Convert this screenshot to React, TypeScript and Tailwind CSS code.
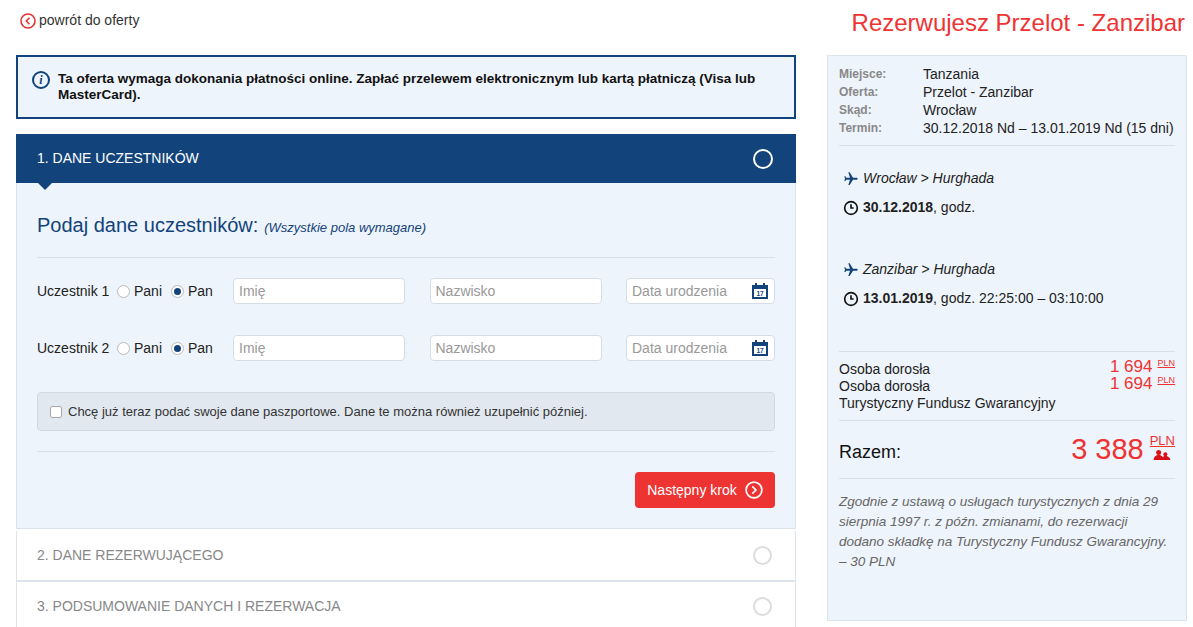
import React from "react";

const blue = "#12437a";

function Plane() {
  return (
    <svg viewBox="0 0 24 24" className="h-4 w-4" fill={blue}>
      <path d="M21 16v-2l-8-5V3.5a1.5 1.5 0 0 0-3 0V9l-8 5v2l8-2.5V19l-2 1.5V22l3.5-1 3.5 1v-1.5L13 19v-5.5z" transform="rotate(90 12 12)" />
    </svg>
  );
}

function Clock() {
  return (
    <svg viewBox="0 0 24 24" className="h-4 w-4" fill="none" stroke="#111" strokeWidth="2.5">
      <circle cx="12" cy="12" r="9.5" />
      <path d="M12 6.5V12h4" />
    </svg>
  );
}

function Cal() {
  return (
    <svg viewBox="0 0 18 18" className="h-[18px] w-[18px]">
      <rect x="1" y="3" width="16" height="14" fill={blue} />
      <rect x="3" y="7" width="12" height="8" fill="#fff" />
      <rect x="4" y="1" width="2" height="4" fill={blue} />
      <rect x="12" y="1" width="2" height="4" fill={blue} />
      <text x="9" y="14" fontSize="6.5" textAnchor="middle" fill={blue} fontFamily="Liberation Sans" fontWeight="bold">17</text>
    </svg>
  );
}

function Row({ n }: { n: number }) {
  return (
    <div className="flex items-center h-[26px] text-[14px] text-[#222]">
      <span className="w-[80px]">Uczestnik {n}</span>
      <span className="flex items-center gap-1 w-[54px]">
        <span className="h-[13px] w-[13px] rounded-full border border-[#bbb] bg-white" />
        Pani
      </span>
      <span className="flex items-center gap-1 w-[62px]">
        <span className="h-[13px] w-[13px] rounded-full border border-[#bbb] bg-white flex items-center justify-center">
          <span className="h-[7px] w-[7px] rounded-full bg-[#12437a]" />
        </span>
        Pan
      </span>
      <div className="flex-1 grid grid-cols-[172px_172px_149px] justify-between">
        {["Imię", "Nazwisko", "Data urodzenia"].map((p, i) => (
          <div key={p} className="h-[26px] bg-white border border-[#d6dde6] rounded-sm flex items-center justify-between px-[5px] text-[#999]">
            {p}
            {i === 2 && <Cal />}
          </div>
        ))}
      </div>
    </div>
  );
}

function Step({ t }: { t: string }) {
  return (
    <div className="h-[50px] bg-white border border-[#dde3ea] border-t-0 flex items-center justify-between pl-[20px] pr-[23px] text-[14px] text-[#888]">
      {t}
      <span className="h-[19px] w-[19px] rounded-full border-2 border-[#ddd]" />
    </div>
  );
}

export default function App() {
  return (
    <div className="w-[1193px] h-[627px] overflow-hidden bg-white font-[Liberation_Sans,Arial,sans-serif] relative">
      <div className="flex justify-between items-start pl-[20px] pr-[8px]">
        <div className="flex items-center gap-[3px] mt-[10px] text-[14px] text-[#333]">
          <svg viewBox="0 0 16 16" className="h-[16px] w-[16px]" fill="none" stroke="#e83232" strokeWidth="1.6">
            <circle cx="8" cy="8" r="7" />
            <path d="M9.5 4.8 6.3 8l3.2 3.2" />
          </svg>
          powrót do oferty
        </div>
        <div className="text-[24px] text-[#ee3333] mt-[5px]">Rezerwujesz Przelot - Zanzibar</div>
      </div>
      <div className="flex gap-[31px] pl-[16px] mt-[14px]">
        <div className="w-[780px]">
          <div className="border-2 border-[#12437a] bg-[#eef4fb] h-[64px] flex items-start gap-[8px] pl-[14px] pr-[10px] pt-[14px]">
            <span className="h-[18px] w-[18px] shrink-0 rounded-full border-2 border-[#12437a] text-[#12437a] text-[12px] font-bold italic font-[Liberation_Serif,serif] flex items-center justify-center">i</span>
            <p className="text-[13.5px] font-bold text-[#111] leading-[16px]">
              Ta oferta wymaga dokonania płatności online. Zapłać przelewem elektronicznym lub kartą płatniczą (Visa lub MasterCard).
            </p>
          </div>
          <div className="mt-[15px] h-[49px] bg-[#12437a] flex items-center justify-between pl-[21px] pr-[23px] text-white text-[14px] relative">
            1. DANE UCZESTNIKÓW
            <span className="h-[20px] w-[20px] rounded-full border-2 border-white" />
            <span className="absolute left-[21px] top-[48px] border-x-[8px] border-x-transparent border-t-[8px] border-t-[#12437a]" />
          </div>
          <div className="bg-[#eef4fb] border border-[#dde3ea] border-t-0 px-[20px] pt-[27px] pb-[20px]">
            <div className="flex items-baseline gap-[6px] text-[#12437a]">
              <span className="text-[20px]">Podaj dane uczestników:</span>
              <span className="text-[13px] italic">(Wszystkie pola wymagane)</span>
            </div>
            <div className="border-t border-[#d7dfe8] mt-[17px]" />
            <div className="mt-[20px] flex flex-col gap-[31px]">
              <Row n={1} />
              <Row n={2} />
            </div>
            <div className="mt-[31px] h-[39px] bg-[#e2e8ef] border border-[#d0d8e1] rounded-sm flex items-center gap-[6px] px-[12px] text-[13px] text-[#333]">
              <span className="h-[12px] w-[12px] border border-[#aaa] bg-white rounded-[2px]" />
              Chcę już teraz podać swoje dane paszportowe. Dane te można również uzupełnić później.
            </div>
            <div className="border-t border-[#d7dfe8] mt-[20px]" />
            <div className="flex justify-end mt-[20px]">
              <button className="h-[36px] w-[140px] bg-[#ee3333] text-white text-[14px] flex items-center justify-center gap-[8px] rounded-sm">
                Następny krok
                <svg viewBox="0 0 16 16" className="h-[18px] w-[18px]" fill="none" stroke="#fff" strokeWidth="1.5">
                  <circle cx="8" cy="8" r="7" />
                  <path d="M6.5 4.8 9.7 8l-3.2 3.2" />
                </svg>
              </button>
            </div>
          </div>
          <div className="h-[2px]" />
          <Step t="2. DANE REZERWUJĄCEGO" />
          <div className="border-t border-[#dde3ea]"><Step t="3. PODSUMOWANIE DANYCH I REZERWACJA" /></div>
        </div>
        <div className="w-[360px] h-[566px] bg-[#eef4fb] border border-[#dde3ea] px-[11px] pt-[9px] text-[14px] text-[#222]">
          <div className="grid grid-cols-[84px_1fr] leading-[18px]">
            <span className="text-[12px] font-bold text-[#888]">Miejsce:</span><span>Tanzania</span>
            <span className="text-[12px] font-bold text-[#888]">Oferta:</span><span>Przelot - Zanzibar</span>
            <span className="text-[12px] font-bold text-[#888]">Skąd:</span><span>Wrocław</span>
            <span className="text-[12px] font-bold text-[#888]">Termin:</span><span className="whitespace-nowrap">30.12.2018 Nd – 13.01.2019 Nd (15 dni)</span>
          </div>
          <div className="border-t border-[#d7dfe8] mt-[8px]" />
          <div className="pl-[4px] mt-[22px] flex flex-col gap-[8px]">
            <div className="flex items-center gap-[4px] italic"><Plane /> Wrocław &gt; Hurghada</div>
            <div className="flex items-center gap-[4px]"><Clock /> <span><b>30.12.2018</b>, godz.</span></div>
          </div>
          <div className="pl-[4px] mt-[41px] flex flex-col gap-[8px]">
            <div className="flex items-center gap-[4px] italic"><Plane /> Zanzibar &gt; Hurghada</div>
            <div className="flex items-center gap-[4px]"><Clock /> <span><b>13.01.2019</b>, godz. 22:25:00 – 03:10:00</span></div>
          </div>
          <div className="border-t border-[#d7dfe8] mt-[42px]" />
          <div className="mt-[9px] leading-[17px] text-[14px]">
            {["Osoba dorosła", "Osoba dorosła"].map((l, i) => (
              <div key={i} className="flex justify-between h-[17px]">
                <span>{l}</span>
                <span className="text-[#ee3333] text-[17px] flex items-start gap-[5px] leading-[17px] -mt-[3px]">1 694<span className="text-[9px] underline leading-[10px]">PLN</span></span>
              </div>
            ))}
            <div>Turystyczny Fundusz Gwarancyjny</div>
          </div>
          <div className="border-t border-[#d7dfe8] mt-[8px]" />
          <div className="flex justify-between items-center mt-[10px]">
            <span className="text-[18px] text-[#111] mt-[8px]">Razem:</span>
            <span className="flex items-start gap-[6px] text-[#ee3333]">
              <span className="text-[29px] leading-[30px]">3 388</span>
              <span className="flex flex-col items-center">
                <span className="text-[13px] underline leading-[14px]">PLN</span>
                <svg viewBox="0 0 20 12" className="h-[10px] w-[18px] mt-[2px]" fill="#d9101a"><circle cx="6" cy="3" r="3" /><path d="M0 12c0-4 3-6 6-6s6 2 6 6z" /><circle cx="14" cy="5" r="2.4" /><path d="M10 12c0-3 2-5 4-5s6 2 6 5z" /></svg>
              </span>
            </span>
          </div>
          <div className="border-t border-[#d7dfe8] mt-[12px]" />
          <p className="mt-[13px] italic text-[13.5px] text-[#666] leading-[20px]">
            Zgodnie z ustawą o usługach turystycznych z dnia 29 sierpnia 1997 r. z późn. zmianami, do rezerwacji dodano składkę na Turystyczny Fundusz Gwarancyjny. – 30 PLN
          </p>
        </div>
      </div>
    </div>
  );
}
